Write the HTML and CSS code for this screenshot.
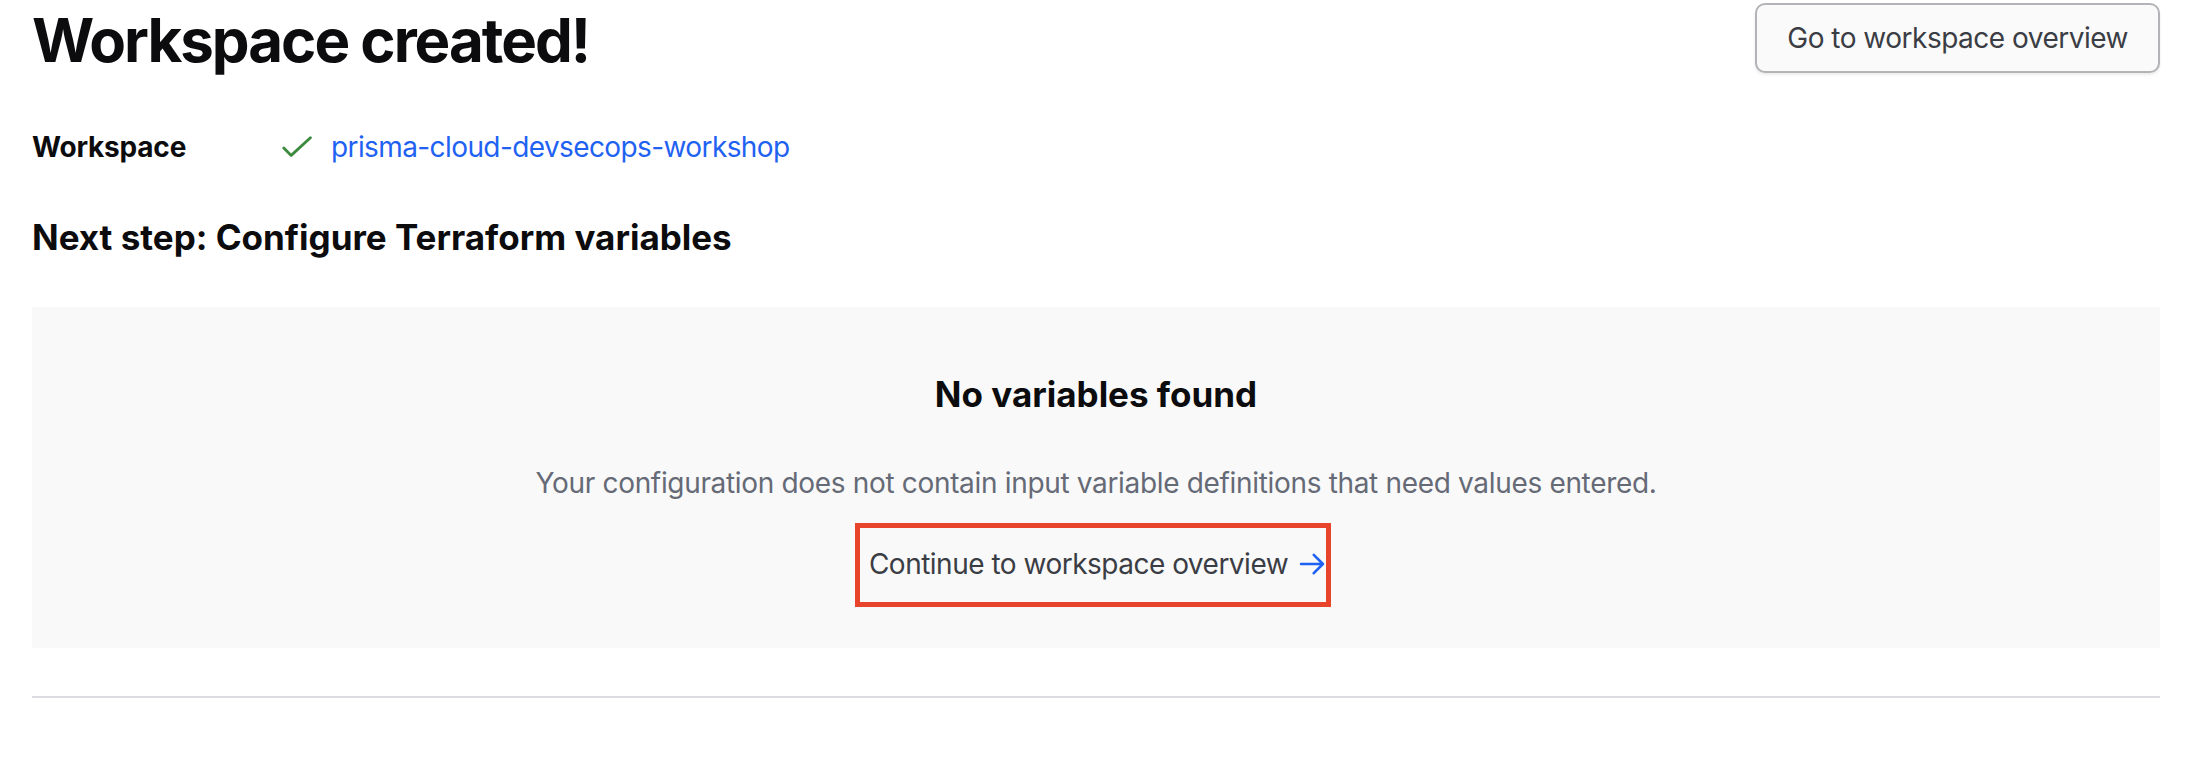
FILE: index.html
```html
<!DOCTYPE html>
<html lang="en">
<head>
<meta charset="utf-8">
<title>Workspace created!</title>
<link rel="stylesheet" href="styles.css">
</head>
<body>
<main class="page">
  <header class="page-header">
    <h1 class="page-title">Workspace created!</h1>
    <button class="btn-secondary" type="button">Go to workspace overview</button>
  </header>

  <dl class="summary-row">
    <dt class="summary-label">Workspace</dt>
    <dd class="summary-value">
      <svg class="icon-check" width="30" height="22" viewBox="0 0 30 22" aria-hidden="true">
        <polyline points="1.8,12 9.2,19.4 28.4,1.8" fill="none" stroke="#3b8a3e" stroke-width="2.8" stroke-linecap="round" stroke-linejoin="round"/>
      </svg>
      <a class="workspace-link" href="#">prisma-cloud-devsecops-workshop</a>
    </dd>
  </dl>

  <h2 class="section-title">Next step: Configure Terraform variables</h2>

  <section class="empty-state">
    <h3 class="empty-title">No variables found</h3>
    <p class="empty-body">Your configuration does not contain input variable definitions that need values entered.</p>
    <a class="continue-link" href="#">Continue to workspace overview
      <svg class="icon-arrow" width="28" height="28" viewBox="0 0 16 16" aria-hidden="true">
        <path fill="#1f62f2" d="M8.47 2.22a.75.75 0 011.06 0l5.25 5.25a.75.75 0 010 1.06l-5.25 5.25a.75.75 0 11-1.06-1.06l3.97-3.97H1.75a.75.75 0 010-1.5h10.69L8.47 3.28a.75.75 0 010-1.06z"/>
      </svg>
    </a>
  </section>

  <hr class="divider">
</main>
</body>
</html>
```

FILE: styles.css
```css
* { box-sizing: border-box; }

html, body {
  margin: 0;
  background: #ffffff;
}

body {
  font-family: Inter, "Noto Sans", "Liberation Sans", sans-serif;
  font-size: 28px;
  line-height: 42px;
  letter-spacing: -0.45px;
  color: #0c0c0e;
}

.page {
  padding: 0 44px 0 32px;
}

.page-header {
  display: flex;
  justify-content: space-between;
  align-items: flex-start;
  padding-top: 2px;
}

.page-title {
  margin: 0;
  font-size: 60px;
  line-height: 76px;
  font-weight: 700;
  letter-spacing: -2px;
  color: #0c0c0e;
}

.btn-secondary {
  margin-top: 1px;
  font-family: inherit;
  font-size: 28px;
  line-height: 42px;
  letter-spacing: -0.5px;
  color: #3b3d45;
  background: #fafafa;
  border: 2px solid #b4b4b8;
  border-radius: 10px;
  padding: 12px 30px;
  box-shadow: 0 2px 3px rgba(0, 0, 0, 0.08);
  cursor: pointer;
}

.summary-row {
  display: flex;
  align-items: center;
  margin: 48px 0 0;
}

.summary-label {
  width: 250px;
  font-weight: 700;
  letter-spacing: -0.2px;
  margin: 0;
}

.summary-value {
  display: flex;
  align-items: center;
  gap: 19px;
  margin: 0;
}

.icon-check { display: block; }

.workspace-link {
  color: #1f62f2;
  text-decoration: none;
  letter-spacing: -0.6px;
}

.section-title {
  margin: 48px 0 0;
  font-size: 35px;
  line-height: 42px;
  font-weight: 700;
  letter-spacing: 0;
}

.empty-state {
  margin-top: 49px;
  background: #f9f9f9;
  padding: 66px 32px 41px;
  display: flex;
  flex-direction: column;
  align-items: center;
  text-align: center;
}

.empty-title {
  margin: 0;
  font-size: 35px;
  line-height: 42px;
  font-weight: 700;
  letter-spacing: 0;
  color: #0c0c0e;
}

.empty-body {
  margin: 47px 0 0;
  color: #656a76;
  letter-spacing: -0.33px;
}

.continue-link {
  margin-top: 19px;
  display: inline-flex;
  align-items: center;
  gap: 10px;
  padding: 15px 0 17px 9px;
  border: 5px solid #e8442b;
  color: #3b3d45;
  text-decoration: none;
  letter-spacing: -0.5px;
  transform: translateX(-3px);
}

.icon-arrow { display: block; }

.divider {
  margin: 48px 0 0;
  border: 0;
  height: 2px;
  background: #dcdbe3;
}
```
